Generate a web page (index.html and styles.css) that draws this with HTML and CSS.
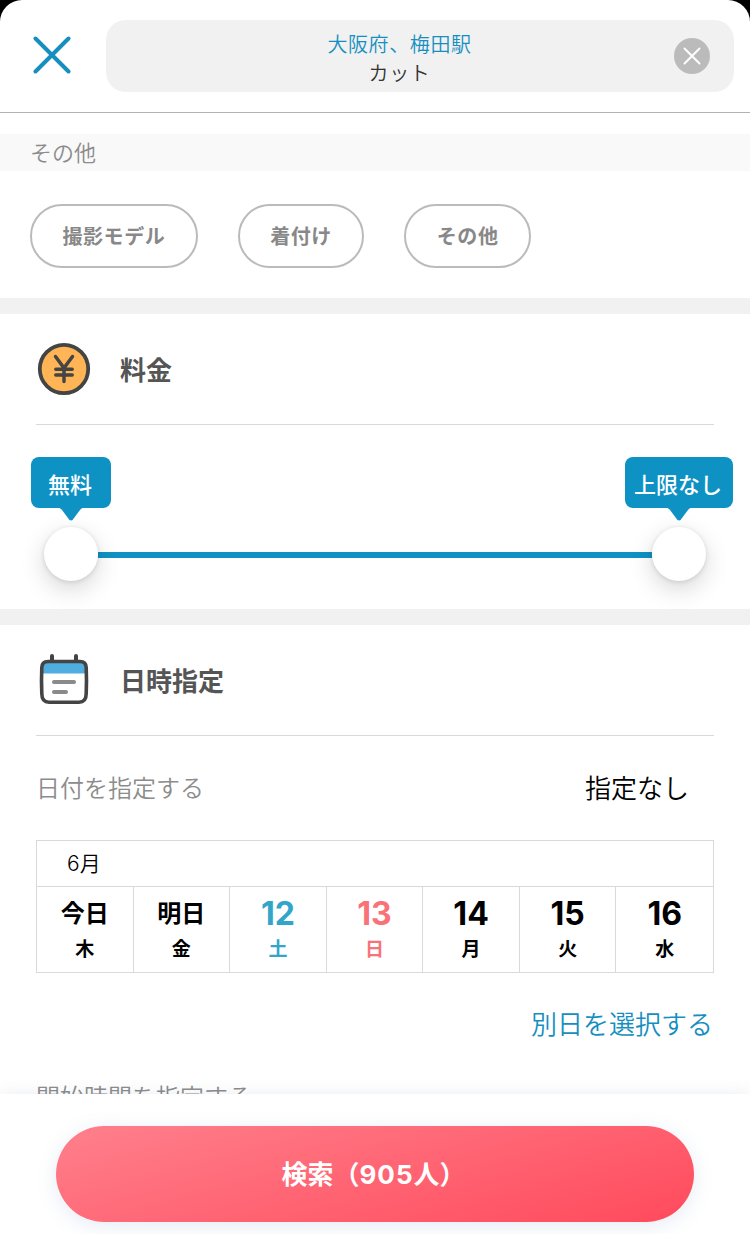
FILE: index.html
```html
<!DOCTYPE html>
<html lang="ja">
<head>
    <meta charset="UTF-8">
    <meta name="viewport" content="width=device-width, initial-scale=1.0">
    <title>検索条件</title>
    <link rel="stylesheet" href="styles.css">
</head>
<body>
    <div class="screen">
        <header class="header">
            <button class="close" type="button">
                <svg width="38" height="38" viewBox="0 0 38 38"><path d="M2.5 2.5l33 33M35.5 2.5l-33 33"/></svg>
            </button>
            <div class="search-box">
                <div class="search-text">
                    <p class="place">大阪府、梅田駅</p>
                    <p class="menu">カット</p>
                </div>
                <button class="clear" type="button">
                    <svg width="18" height="18" viewBox="0 0 18 18"><path d="M1.5 1.5l15 15M16.5 1.5l-15 15"/></svg>
                </button>
            </div>
        </header>

        <main class="content">
            <section class="others">
                <h3 class="band">その他</h3>
                <div class="chips">
                    <button class="chip" type="button">撮影モデル</button>
                    <button class="chip" type="button">着付け</button>
                    <button class="chip" type="button">その他</button>
                </div>
            </section>

            <section class="price">
                <div class="section-title">
                    <svg width="56" height="56" viewBox="0 0 56 56">
                        <circle cx="28" cy="28" r="24.2" fill="#ffb556" stroke="#444" stroke-width="3.8"/>
                        <path d="M19.500 15.500l8.500 11.500 8.500-11.500M28 27v13.500M19.800 28.3h16.400M19.800 34h16.400" fill="none" stroke="#444" stroke-width="3.5" stroke-linecap="round" stroke-linejoin="round"/>
                    </svg>
                    <h2>料金</h2>
                </div>
                <div class="slider">
                    <div class="knob">
                        <span class="tip tip-min">無料
                            <svg width="32" height="14" viewBox="0 0 32 14"><path d="M0 0h32c-4 0-5 1-7 3l-6 8q-3 5-6 0L7 3c-2-2-3-3-7-3z"/></svg>
                        </span>
                    </div>
                    <div class="track"></div>
                    <div class="knob">
                        <span class="tip tip-max">上限なし
                            <svg width="32" height="14" viewBox="0 0 32 14"><path d="M0 0h32c-4 0-5 1-7 3l-6 8q-3 5-6 0L7 3c-2-2-3-3-7-3z"/></svg>
                        </span>
                    </div>
                </div>
            </section>

            <section class="date">
                <div class="section-title">
                    <svg width="56" height="56" viewBox="0 0 56 56">
                        <path d="M10.500 9.500h35q5 0 5.500 5v7H5v-7q.5-5 5.500-5z" fill="#50ade0"/>
                        <path d="M16 4v5M40 4v5" fill="none" stroke="#444" stroke-width="4" stroke-linecap="round"/>
                        <path d="M12 9.500h32q6 0 6.200 6 .6 13 0 26 0 8.700-7.200 8.700H13q-7.200 0-7.200-8.700-.6-13 0-26 .2-6 6.200-6z" fill="none" stroke="#444" stroke-width="3.600"/>
                        <path d="M18 30h20M18 40h12" fill="none" stroke="#8a8a8a" stroke-width="4" stroke-linecap="round"/>
                    </svg>
                    <h2>日時指定</h2>
                </div>
                <div class="date-row">
                    <span class="label">日付を指定する</span>
                    <span class="value">指定なし</span>
                </div>
                <div class="calendar">
                    <div class="month">6月</div>
                    <div class="days">
                        <div class="day"><b class="kanji">今日</b><span>木</span></div>
                        <div class="day"><b class="kanji">明日</b><span>金</span></div>
                        <div class="day sat"><b>12</b><span>土</span></div>
                        <div class="day sun"><b>13</b><span>日</span></div>
                        <div class="day"><b>14</b><span>月</span></div>
                        <div class="day"><b>15</b><span>火</span></div>
                        <div class="day"><b>16</b><span>水</span></div>
                    </div>
                </div>
                <a class="other-day">別日を選択する</a>
                <p class="label time-label">開始時間を指定する</p>
            </section>
        </main>

        <footer class="footer">
            <button class="submit" type="button">検索（<span class="count">905</span>人）</button>
        </footer>
    </div>
</body>
</html>
```
FILE: styles.css
```css
* {
    box-sizing: border-box;
}

body {
    margin: 0;
    background: #000;
    font-family: Inter, 'Noto Sans CJK JP', sans-serif;
    color: #000;
}

h2, h3, p {
    margin: 0;
}

button {
    font-family: inherit;
    border: none;
    background: none;
    padding: 0;
}

svg {
    display: block;
}

.screen {
    display: flex;
    flex-direction: column;
    height: 1234px;
    background: #fff;
    border-radius: 22px 22px 0 0;
    overflow: hidden;
}

/* Header */
.header {
    display: flex;
    align-items: center;
    flex-shrink: 0;
    height: 113px;
    padding: 0 16px 0 33px;
    border-bottom: 1px solid #b2b2b2;
}

.close {
    margin-right: 35px;
    margin-top: -2px;
}

.close path {
    stroke: #168fc0;
    stroke-width: 4;
    stroke-linecap: round;
}

.search-box {
    display: flex;
    align-items: center;
    flex: 1;
    height: 72px;
    padding-right: 24px;
    padding-left: 19px;
    background: #f1f1f1;
    border-radius: 20px;
}

.search-text {
    flex: 1;
    padding-top: 7px;
    text-align: center;
    font-size: 20px;
    font-weight: 350;
    line-height: 29px;
    letter-spacing: 0.6px;
}

.place {
    color: #168fc0;
}

.menu {
    color: #333;
}

.clear {
    display: flex;
    align-items: center;
    justify-content: center;
    width: 36px;
    height: 36px;
    border-radius: 50%;
    background: #bbb;
}

.clear path {
    stroke: #fff;
    stroke-width: 2;
    stroke-linecap: round;
}

.content {
    flex: 1;
    min-height: 0;
    overflow: hidden;
}

/* Other menus */
.others {
    height: 201px;
    padding-top: 21px;
    border-bottom: 16px solid #f1f1f1;
}

.band {
    height: 37px;
    padding-left: 30px;
    background: #f9f9f9;
    color: #8c8c8c;
    font-size: 22px;
    font-weight: 350;
    line-height: 38px;
}

.chips {
    display: flex;
    gap: 40px;
    padding: 33px 30px 0;
}

.chip {
    height: 64px;
    padding: 0 30.4px 2px;
    border: 2px solid #bbb;
    border-radius: 32px;
    color: #888;
    font-size: 20px;
    font-weight: 600;
    letter-spacing: 0.6px;
}

/* Sections */
.section-title {
    display: flex;
    align-items: center;
    gap: 28px;
    height: 111px;
    margin: 0 36px;
    border-bottom: 1px solid #d9d9d9;
}

.section-title h2 {
    padding-bottom: 2px;
    color: #555;
    font-size: 26px;
    font-weight: 700;
}

.price {
    height: 311px;
    border-bottom: 16px solid #f1f1f1;
}

.slider {
    display: flex;
    align-items: center;
    padding: 102px 44px 0;
}

.knob {
    position: relative;
    width: 54px;
    height: 54px;
    border-radius: 50%;
    background: #fff;
    box-shadow: 0 8px 24px rgba(0, 0, 0, 0.16), 0 1px 5px rgba(0, 0, 0, 0.12);
}

.track {
    flex: 1;
    height: 6px;
    margin-top: 2px;
    background: #0e92c4;
}

.tip {
    position: absolute;
    top: -70px;
    left: 50%;
    transform: translateX(-50%);
    height: 51px;
    padding-right: 2px;
    border-radius: 8px;
    background: #0e92c4;
    color: #fff;
    font-size: 22px;
    font-weight: 500;
    line-height: 57px;
    text-align: center;
    white-space: nowrap;
}

.tip-min {
    width: 80px;
}

.tip-max {
    width: 108px;
}

.tip svg {
    position: absolute;
    top: 50px;
    left: 50%;
    transform: translateX(-50%);
    fill: #0e92c4;
}

/* Date */
.date-row {
    display: flex;
    align-items: center;
    justify-content: space-between;
    height: 104px;
    padding: 0 61px 3px 36px;
}

.label {
    color: #8c8c8c;
    font-size: 24px;
    font-weight: 350;
}

.value {
    font-size: 26px;
    font-weight: 350;
}

.calendar {
    margin: 0 36px;
    border: 1px solid #d9d9d9;
}

.month {
    height: 45px;
    padding-left: 30px;
    font-size: 21px;
    font-weight: 350;
    line-height: 45px;
}

.days {
    display: grid;
    grid-template-columns: repeat(7, 1fr);
    border-top: 1px solid #d9d9d9;
}

.day {
    display: flex;
    flex-direction: column;
    align-items: center;
    height: 85px;
    padding-top: 9px;
    border-right: 1px solid #d9d9d9;
    font-size: 19px;
    font-weight: 600;
}

.day:last-child {
    border-right: none;
}

.day b {
    font-size: 32px;
    font-weight: 700;
    line-height: 36px;
}

.day .kanji {
    font-size: 24px;
}

.day span {
    line-height: 35px;
}

.sat {
    color: #32a5c8;
}

.sun {
    color: #f87278;
}

.other-day {
    display: block;
    padding: 33px 37px 0;
    color: #168fc0;
    font-size: 26px;
    font-weight: 350;
    line-height: 38px;
    text-align: right;
}

.time-label {
    padding: 36px 36px 0;
    line-height: 36px;
}

/* Footer */
.footer {
    position: relative;
    flex-shrink: 0;
    height: 140px;
    padding: 32px 56px 0;
    background: #fff;
    box-shadow: 0 0 16px rgba(60, 80, 120, 0.1);
}

.submit {
    display: block;
    width: 100%;
    height: 96px;
    padding: 0 3px 3px 0;
    border-radius: 48px;
    background: linear-gradient(165deg, #ff808c, #ff4a5c);
    box-shadow: 0 4px 20px rgba(80, 120, 180, 0.15);
    color: #fff;
    font-size: 26px;
    font-weight: 700;
}

.count {
    letter-spacing: 1px;
    font-weight: 650;
}
```
